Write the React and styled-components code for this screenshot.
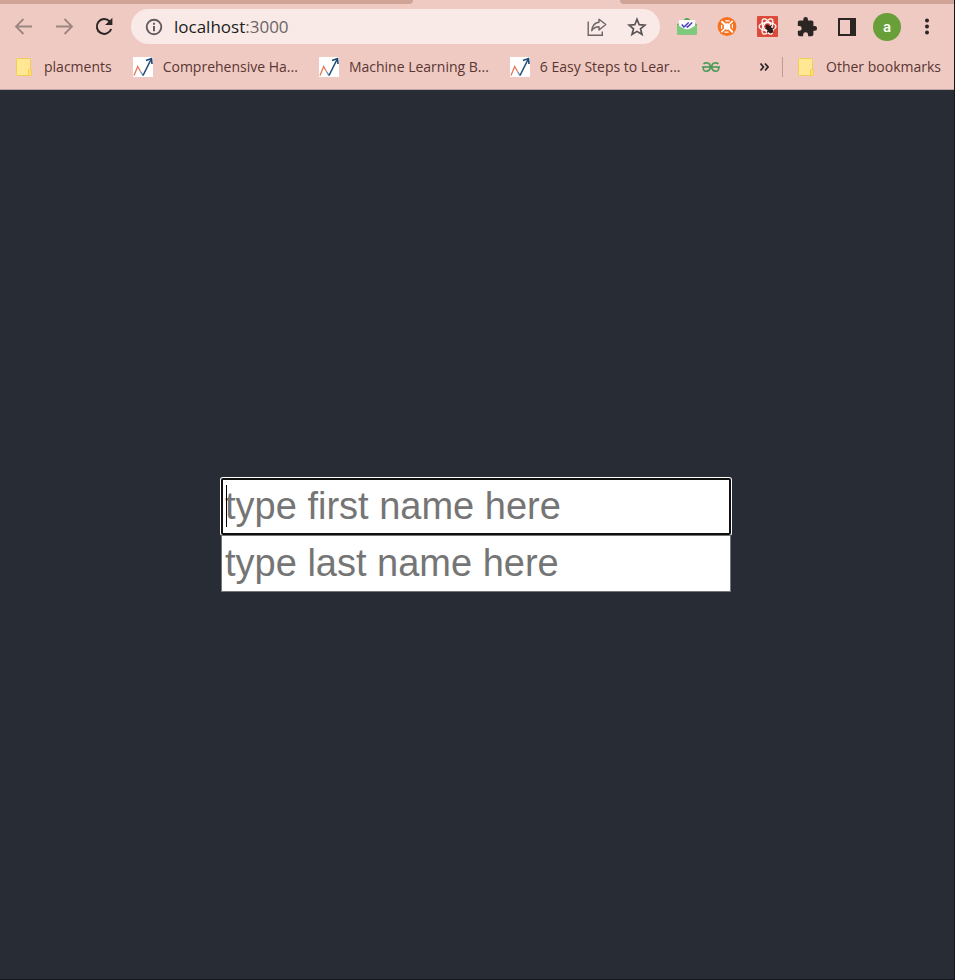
import React, { useState } from "react";
import styled, { createGlobalStyle } from "styled-components";

const GlobalStyle = createGlobalStyle`
  *, *::before, *::after { box-sizing: border-box; }
  body { margin: 0; background: #282c34; }
`;

const uiFont = `"Open Sans", "Noto Sans", sans-serif`;

const Window = styled.div`
  display: flex;
  flex-direction: column;
  min-height: 100vh;
  background: #282c34;
  border-right: 1px solid #14161b;
  border-bottom: 1px solid #14161b;
  font-family: ${uiFont};
`;

const Chrome = styled.header`
  background: #efcac3;
  border-bottom: 1px solid #c3a5a1;
`;

const TabStrip = styled.div`
  display: flex;
  height: 4px;
`;

const InactiveTabs = styled.div`
  flex: ${(p) => p.$share} 1 0;
  background: #cfa396;
  border-radius: ${(p) => (p.$side === "left" ? "0 0 8px 0" : "0 0 0 8px")};
`;

const ActiveTab = styled.div`
  flex: 207 1 0;
`;

const Toolbar = styled.nav`
  display: flex;
  align-items: center;
  height: 45px;
  padding: 0 7px 0 4px;
`;

const IconButton = styled.button`
  display: flex;
  flex: none;
  align-items: center;
  justify-content: center;
  width: 40px;
  height: 36px;
  padding: 0;
  border: 0;
  background: none;
  color: ${(p) => p.$color || "#2b2524"};
`;

const AddressBar = styled.div`
  display: flex;
  flex: 1;
  align-items: center;
  min-width: 0;
  height: 35px;
  margin: 0 7px;
  padding: 0 3px;
  border-radius: 18px;
  background: #f9eae8;
`;

const Address = styled.div`
  flex: 1;
  min-width: 0;
  font-size: 17px;
  line-height: 24px;
  color: #6b6465;
`;

const Host = styled.span`
  color: #201c1d;
`;

const Avatar = styled.span`
  display: flex;
  align-items: center;
  justify-content: center;
  width: 28px;
  height: 28px;
  border-radius: 50%;
  background: #689f38;
  color: #fff;
  font-family: Roboto, sans-serif;
  font-size: 15px;
  font-weight: 500;
  line-height: 20px;
`;

const BookmarksBar = styled.nav`
  display: flex;
  align-items: center;
  height: 40px;
  padding: 0 13px 4px 14px;
`;

const BookmarkList = styled.div`
  display: flex;
  flex: 1;
  align-items: center;
  gap: 21px;
  min-width: 0;
`;

const Bookmark = styled.a`
  display: flex;
  flex: none;
  align-items: center;
  gap: 10px;
  color: #5a3632;
  font-size: 14px;
  line-height: 20px;
  white-space: nowrap;
  text-decoration: none;
`;

const MoreButton = styled(IconButton)`
  width: 36px;
  height: 28px;
`;

const Divider = styled.span`
  width: 1px;
  height: 20px;
  margin-right: 13px;
  background: #bf9b95;
`;

const Main = styled.main`
  display: flex;
  flex: 1;
  align-items: center;
  justify-content: center;
  padding-right: 2px;
`;

const NameForm = styled.form`
  display: flex;
  flex-direction: column;
  width: 510px;
  max-width: 100%;
`;

const Field = styled.label`
  position: relative;
  display: block;
  &:focus-within > span { display: block; }
`;

const Caret = styled.span`
  position: absolute;
  display: none;
  top: 7px;
  left: 5px;
  width: 1px;
  height: 42px;
  background: #000;
`;

const TextInput = styled.input`
  display: block;
  width: 100%;
  height: 57px;
  padding: 0 3px;
  border: 1px solid #767676;
  border-radius: 0;
  background: #fff;
  color: #000;
  font-family: "Liberation Sans", Arial, sans-serif;
  font-size: 38px;
  line-height: 44px;
  &::placeholder { color: #757575; opacity: 1; }
  &:focus {
    padding: 0 2px;
    border: 2px solid #101010;
    border-radius: 2px;
    outline: none;
    box-shadow: 0 0 0 1px #fff;
  }
  &:focus:placeholder-shown { caret-color: transparent; }
`;

const ArrowIcon = ({ forward }) => (
  <svg width="20" height="20" viewBox="0 0 20 20" fill="none" stroke="currentColor" strokeWidth="1.8">
    <path d={forward ? "M2 9.500H17.500M10.500 2 18 9.500l-7.500 7.500" : "M18 9.500H2.500M9.500 2 2 9.500l7.500 7.500"} />
  </svg>
);

const ReloadIcon = () => (
  <svg width="20" height="20" viewBox="0 0 20 20">
    <path d="M15.700 4.500A7.400 7.400 0 1 0 17.200 12" fill="none" stroke="currentColor" strokeWidth="2" />
    <path d="M18.400 .8V8.100H11.100Z" fill="currentColor" />
  </svg>
);

const InfoIcon = () => (
  <svg width="18" height="18" viewBox="0 0 18 18">
    <circle cx="9" cy="9" r="7.300" fill="none" stroke="currentColor" strokeWidth="1.900" />
    <path d="M8 4.700h2v2H8zM8 8h2v5.300H8z" fill="currentColor" />
  </svg>
);

const ShareIcon = () => (
  <svg width="22" height="20" viewBox="0 0 22 20" fill="none" stroke="currentColor" strokeWidth="1.400">
    <path d="M2.200 4.500V18.200H16.300V14.500" />
    <path d="M13 2.200 19.800 7.500 13 13V9.700C9.500 9.700 7.400 11 5.700 13.700 6.300 9 8.800 5.600 13 5.200Z" strokeLinejoin="round" />
  </svg>
);

const StarIcon = () => (
  <svg width="20" height="20" viewBox="0 0 20 20" fill="none" stroke="currentColor" strokeWidth="1.700">
    <path d="M10 2.300 12.200 7.700 18 8.100 13.500 11.800 15 17.500 10 14.400 5 17.500 6.500 11.800 2 8.100 7.800 7.700Z" />
  </svg>
);

const MailIcon = () => (
  <svg width="22" height="20" viewBox="0 0 22 20">
    <path d="M1 7.500 10 1h2l9 6.500V16a1.500 1.500 0 0 1-1.500 1.500h-17A1.500 1.500 0 0 1 1 16Z" fill="#58a65a" />
    <path d="M2.800 3h16.400v9.500H2.800Z" fill="#fffafa" />
    <path d="M1 7.800 11 13.300l10-5.500V16a1.500 1.500 0 0 1-1.500 1.500h-17A1.500 1.500 0 0 1 1 16Z" fill="#7fc97c" />
    <path d="M5.800 7.500 8 10l4.700-4.500M10.500 9.400l1 .6 4.700-4.500" fill="none" stroke="#4138c8" strokeWidth="1.400" />
  </svg>
);

const OrangeIcon = () => (
  <svg width="20" height="20" viewBox="0 0 20 20">
    <circle cx="10" cy="9.500" r="9.400" fill="#f77221" />
    <circle cx="10" cy="9.500" r="3.200" fill="#fff" />
    <g stroke="#fff" strokeLinecap="round" fill="none">
      <path d="M5 4.800 7.800 7.500M12.500 12l2.700 2.700" strokeWidth="2" />
      <path d="M15.300 4.300 12.500 7M7.500 12l-2.700 2.700" strokeWidth="1.600" />
      <path d="M8.800 3.900h3.400M7.800 15.100h3.400M4.600 8.300v3.200M15.400 7.500v3.200" strokeWidth="1.200" />
    </g>
  </svg>
);

const ReactIcon = () => (
  <svg width="21" height="21" viewBox="0 0 21 21">
    <rect width="21" height="21" rx="1" fill="#dc4a3b" />
    <g fill="none" stroke="#fff" strokeWidth="1.300">
      <ellipse cx="10.500" cy="10.500" rx="8.500" ry="3.900" />
      <ellipse cx="10.500" cy="10.500" rx="8.500" ry="3.900" transform="rotate(60 10.500 10.500)" />
      <ellipse cx="10.500" cy="10.500" rx="8.500" ry="3.900" transform="rotate(120 10.500 10.500)" />
    </g>
    <g stroke="#2c1c1c" strokeWidth="1.100">
      <ellipse cx="12.800" cy="13.500" rx="2" ry="3.500" fill="#2c1c1c" transform="rotate(-35 12.800 13.500)" />
      <circle cx="10.300" cy="10.300" r="1.300" fill="#2c1c1c" />
      <path d="M8.500 12.500h3M10 16.500l2-2M14.500 9l-1.500 3M17 12l-3 .8M16.500 16.500l-2-1.500" />
    </g>
  </svg>
);

const PuzzleIcon = () => (
  <svg width="22" height="22" viewBox="0 0 24 24" fill="currentColor">
    <path d="M20.500 11H19V7c0-1.100-.9-2-2-2h-4V3.500a2.500 2.500 0 0 0-5 0V5H4c-1.100 0-2 .9-2 2v3.800h1.500a2.700 2.700 0 0 1 0 5.400H2V20c0 1.100.9 2 2 2h3.800v-1.500a2.700 2.700 0 0 1 5.400 0V22H17c1.100 0 2-.9 2-2v-4h1.500a2.500 2.500 0 0 0 0-5Z" />
  </svg>
);

const PanelIcon = () => (
  <svg width="18" height="18" viewBox="0 0 18 18">
    <path d="M1 1h16v16H1Z" fill="none" stroke="currentColor" strokeWidth="2" />
    <path d="M12 0h6v18h-6Z" fill="currentColor" />
  </svg>
);

const MenuIcon = () => (
  <svg width="6" height="18" viewBox="0 0 6 18" fill="currentColor">
    <circle cx="3" cy="2.500" r="2" />
    <circle cx="3" cy="8.500" r="2" />
    <circle cx="3" cy="14.500" r="2" />
  </svg>
);

const FolderIcon = () => (
  <svg width="20" height="20" viewBox="0 0 20 20" stroke="#f2cc58">
    <rect x="2.500" y="1.500" width="14" height="17" rx="1" fill="#ffe793" />
    <path d="M14.500 18.500v-5.200a1 1 0 0 1 1-1h1a1 1 0 0 1 1 1v4.200a1 1 0 0 1-1 1Z" fill="#ffdf6c" />
  </svg>
);

const ChartIcon = () => (
  <svg width="20" height="20" viewBox="0 0 20 20" fill="none">
    <rect width="20" height="20" fill="#fff" />
    <path d="M1 18.500 4.700 9.500 7.500 14.500" stroke="#e2785a" strokeWidth="1.300" />
    <path d="M7.500 14.500 10 18.500" stroke="#6384ab" strokeWidth="1.300" />
    <path d="M10 18.500 18 2.500" stroke="#1d4875" strokeWidth="1.600" />
    <path d="M13 3.500 18.500 1.500 19 7" stroke="#1d4875" strokeWidth="1.600" />
  </svg>
);

const GeeksIcon = () => (
  <svg width="18" height="12" viewBox="0 0 18 12" fill="none" stroke="#4a9c59" strokeWidth="1.600">
    <path d="M0 6H18" />
    <path d="M1.500 3C3.500 1.200 8.300 1.200 8.300 6 8.300 11 2.500 11.200 1.400 8.500V6" />
    <path d="M16.500 3C14.500 1.200 9.700 1.200 9.700 6 9.700 11 15.500 11.200 16.600 8.500V6" />
  </svg>
);

const ChevronsIcon = () => (
  <svg width="10" height="9" viewBox="0 0 10 9" fill="none" stroke="currentColor" strokeWidth="1.700">
    <path d="M1.500 .5l3 3.500-3 3.500M6 .5l3 3.500-3 3.500" />
  </svg>
);

const bookmarks = [
  { title: "placments", icon: <FolderIcon /> },
  { title: "Comprehensive Ha...", icon: <ChartIcon /> },
  { title: "Machine Learning B...", icon: <ChartIcon /> },
  { title: "6 Easy Steps to Lear...", icon: <ChartIcon /> },
];

const fields = [
  { name: "firstName", hint: "type first name here" },
  { name: "lastName", hint: "type last name here" },
];

export default function App() {
  const [values, setValues] = useState({ firstName: "", lastName: "" });

  return (
    <>
      <GlobalStyle />
      <Window>
        <Chrome>
          <TabStrip>
            <InactiveTabs $share={413} $side="left" />
            <ActiveTab />
            <InactiveTabs $share={334} $side="right" />
          </TabStrip>
          <Toolbar aria-label="Browser toolbar">
            <IconButton aria-label="Back" $color="#9d8581"><ArrowIcon /></IconButton>
            <IconButton aria-label="Forward" $color="#9d8581"><ArrowIcon forward /></IconButton>
            <IconButton aria-label="Reload"><ReloadIcon /></IconButton>
            <AddressBar>
              <IconButton aria-label="Site information" $color="#625d5e"><InfoIcon /></IconButton>
              <Address><Host>localhost</Host>:3000</Address>
              <IconButton aria-label="Share" $color="#6c6566"><ShareIcon /></IconButton>
              <IconButton aria-label="Bookmark this page" $color="#595455"><StarIcon /></IconButton>
            </AddressBar>
            <IconButton aria-label="Mail tracker"><MailIcon /></IconButton>
            <IconButton aria-label="Capture"><OrangeIcon /></IconButton>
            <IconButton aria-label="React developer tools"><ReactIcon /></IconButton>
            <IconButton aria-label="Extensions"><PuzzleIcon /></IconButton>
            <IconButton aria-label="Side panel"><PanelIcon /></IconButton>
            <IconButton aria-label="Profile"><Avatar>a</Avatar></IconButton>
            <IconButton aria-label="Menu"><MenuIcon /></IconButton>
          </Toolbar>
          <BookmarksBar aria-label="Bookmarks">
            <BookmarkList>
              {bookmarks.map((b) => (
                <Bookmark href="#" key={b.title}>{b.icon}{b.title}</Bookmark>
              ))}
              <Bookmark href="#" aria-label="GeeksforGeeks"><GeeksIcon /></Bookmark>
            </BookmarkList>
            <MoreButton aria-label="More bookmarks"><ChevronsIcon /></MoreButton>
            <Divider />
            <Bookmark href="#"><FolderIcon />Other bookmarks</Bookmark>
          </BookmarksBar>
        </Chrome>
        <Main>
          <NameForm onSubmit={(e) => e.preventDefault()}>
            {fields.map((f, i) => (
              <Field key={f.name}>
                <TextInput
                  aria-label={f.hint}
                  name={f.name}
                  placeholder={f.hint}
                  autoFocus={i === 0}
                  value={values[f.name]}
                  onChange={(e) => setValues({ ...values, [f.name]: e.target.value })}
                />
                {values[f.name] === "" && <Caret />}
              </Field>
            ))}
          </NameForm>
        </Main>
      </Window>
    </>
  );
}
